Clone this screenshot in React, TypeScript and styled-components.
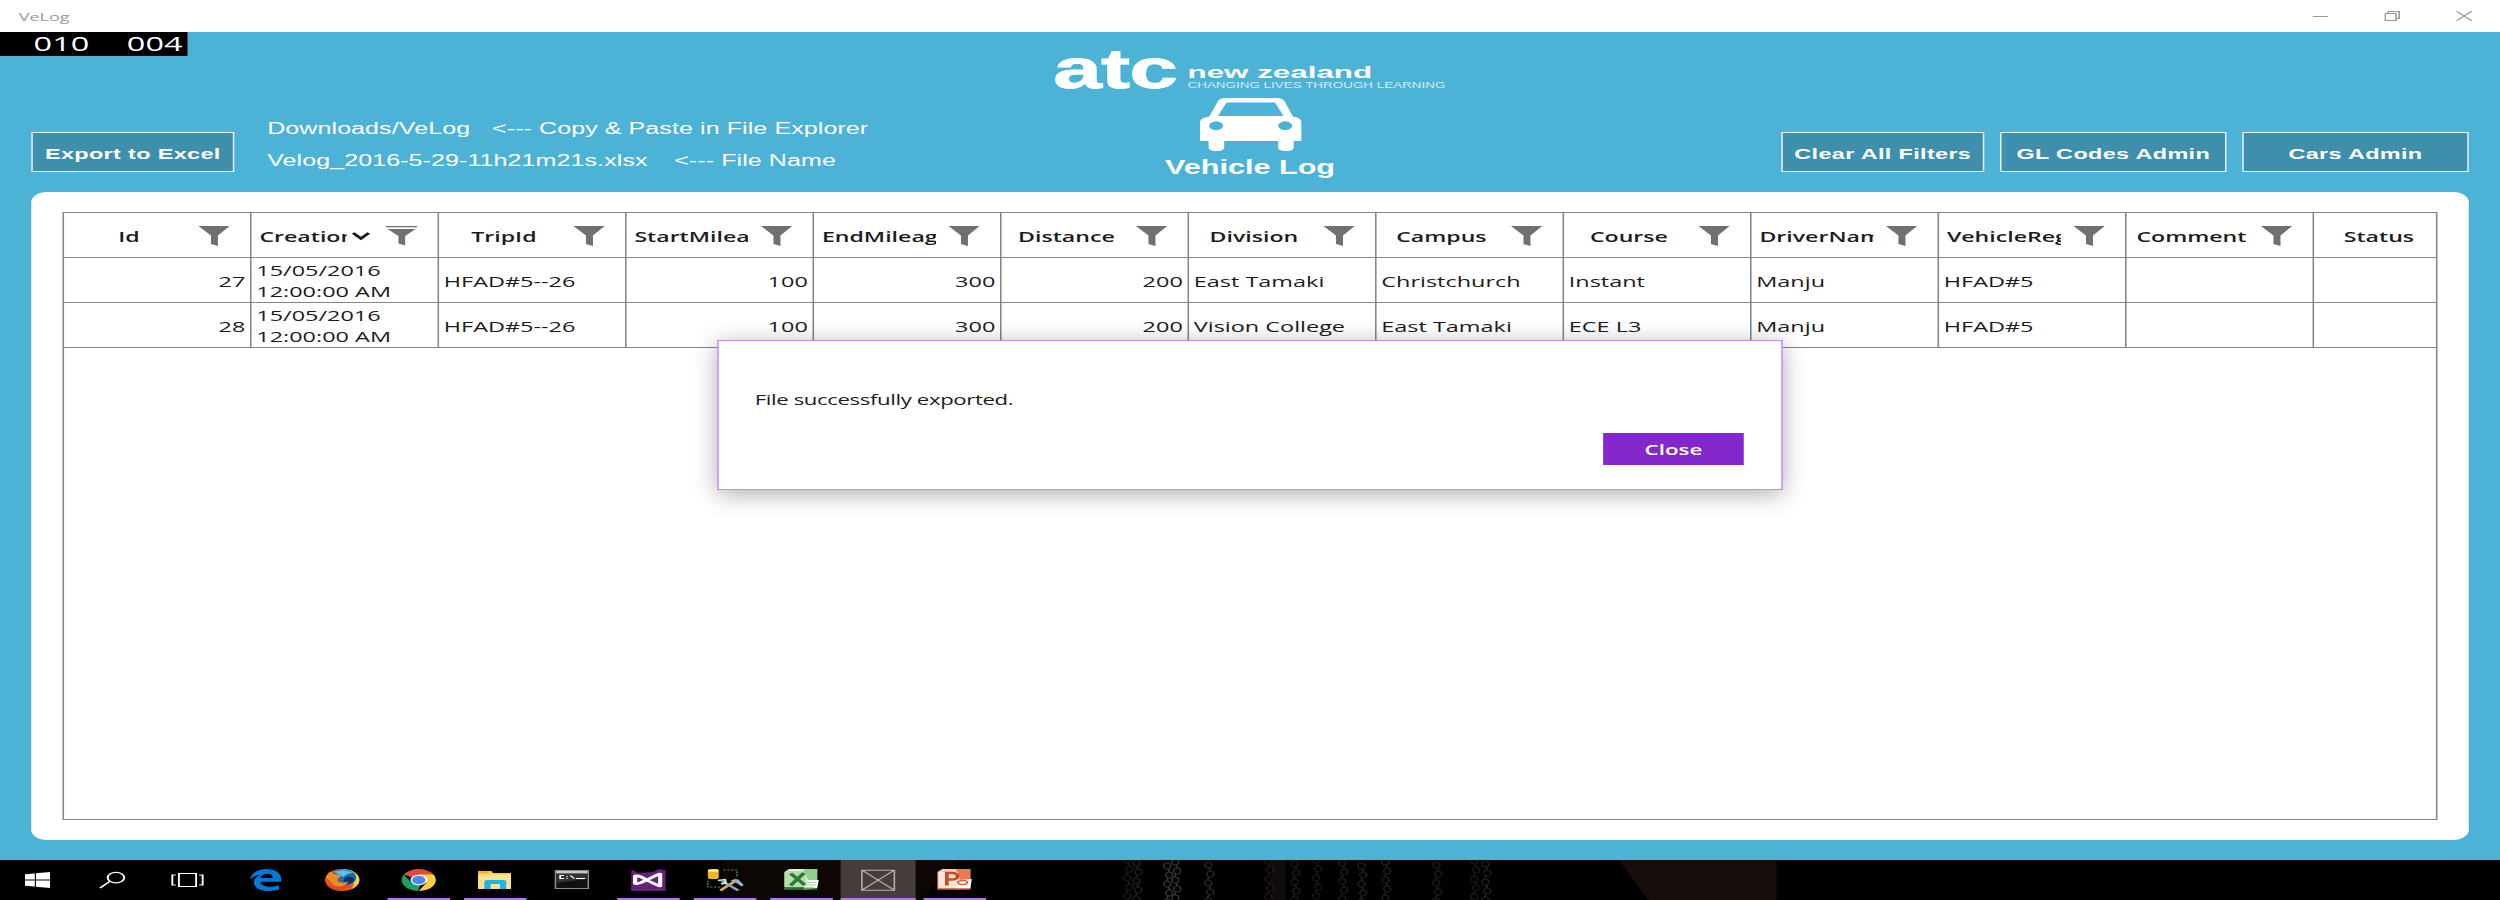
import React from "react";
import styled, { createGlobalStyle } from "styled-components";

const ui = `"Open Sans", "Noto Sans", sans-serif`;
const arial = `"Liberation Sans", Arial, sans-serif`;

const GlobalStyle = createGlobalStyle`
  * { box-sizing: border-box; }
  body { margin: 0; background: #4db3d6; overflow: hidden; }
`;

/* The desktop is 1600x900 and is shown stretched across a wider screen. */
const Desktop = styled.div`
  width: 1600px;
  height: 900px;
  display: flex;
  flex-direction: column;
  position: relative;
  transform: scaleX(1.5625);
  transform-origin: 0 0;
  font-family: ${ui};
  background: #4db3d6;
`;

const TitleBar = styled.header`
  height: 32px;
  flex: none;
  display: flex;
  align-items: center;
  justify-content: space-between;
  padding: 0 0 0 12px;
  background: #fff;
  color: #999;
  font-size: 11.5px;
`;

const WindowButtons = styled.div`
  display: flex;
`;

const WindowButton = styled.span`
  width: 46px;
  height: 32px;
  display: flex;
  align-items: center;
  justify-content: center;
`;

const FrameCounter = styled.div`
  position: absolute;
  left: 0;
  top: 32px;
  width: 120px;
  height: 24px;
  padding-left: 21.5px;
  display: flex;
  gap: 24px;
  background: #000;
  color: #fff;
  font-size: 20.8px;
  line-height: 22px;
`;

const TopBar = styled.section`
  height: 160px;
  flex: none;
  padding: 0 20px;
  display: grid;
  grid-template-columns: 655px 1fr 440px;
`;

const TopLeft = styled.div`
  display: flex;
  align-items: flex-start;
  gap: 21px;
  padding-top: 100px;
`;

const TopRight = styled.div`
  display: flex;
  justify-content: flex-end;
  gap: 10px;
  padding-top: 100px;
`;

const ActionButton = styled.button<{ $w: number }>`
  width: ${(p) => p.$w}px;
  height: 40px;
  padding: 2px 0 0;
  border: 1px solid #e3f2f8;
  background: #3d8fab;
  color: #fff;
  font: bold 15px ${arial};
  letter-spacing: 0.22px;
  white-space: nowrap;
`;

const Notes = styled.div`
  margin-top: -19px;
  color: #fff;
  font: 16px/32px ${arial};
  letter-spacing: 0.06px;
  white-space: pre;
`;

const Note = styled.div<{ $gap: number }>`
  display: flex;
  gap: ${(p) => p.$gap}px;
`;

const Brand = styled.div`
  display: flex;
  flex-direction: column;
  color: #fff;
  font-family: ${arial};
  padding-top: 14px;
`;

const Logo = styled.div`
  display: flex;
  height: 52px;
  white-space: nowrap;
`;

const LogoMark = styled.span`
  width: 85px;
  margin-left: -1px;
  font-size: 56px;
  font-weight: bold;
  line-height: 46px;
  letter-spacing: -0.5px;
  -webkit-text-stroke: 0.8px #fff;
`;

const LogoText = styled.div`
  padding: 18px 0 0 1px;
`;

const LogoName = styled.div`
  font-size: 17px;
  line-height: 17px;
  font-weight: bold;
  transform: scaleX(1.18);
  transform-origin: 0 0;
`;

const LogoTagline = styled.div`
  font-size: 8.6px;
  line-height: 8px;
  opacity: 0.75;
`;

const AppName = styled.div`
  width: 250px;
  display: flex;
  flex-direction: column;
  align-items: center;
  gap: 5px;
  font-size: 19.6px;
  line-height: 22px;
  font-weight: bold;
`;

const Panel = styled.main`
  height: 648px;
  flex: none;
  margin: 0 20px 20px;
  padding: 20px;
  border-radius: 10px;
  background: #fff;
`;

const Grid = styled.div`
  height: 608px;
  border: 1px solid #868686;
  color: #1c1c1c;
  font-size: 15px;
`;

const GridRow = styled.div`
  display: grid;
  grid-template-columns: repeat(12, 120px) 78px;
  height: 45px;
  border-bottom: 1px solid #868686;
`;

const HeadCell = styled.div`
  display: flex;
  align-items: center;
  padding: 1px 13px 0 5px;
  border-right: 1px solid #868686;
  &:last-child {
    border-right: 0;
    padding: 1px 0 0 5px;
  }
`;

const HeadLabel = styled.span<{ $fit: boolean }>`
  flex: 1;
  min-width: 0;
  overflow: hidden;
  white-space: nowrap;
  text-align: ${(p) => (p.$fit ? "center" : "left")};
  font-size: 14.8px;
  line-height: 22px;
  font-weight: 600;
`;

const SortArrow = styled.svg`
  flex: none;
  width: 12px;
  height: 10px;
  margin: 0 2px 0 3px;
`;

const FunnelIcon = styled.svg`
  flex: none;
  width: 20px;
  height: 20px;
  margin: 0 0 0 8px;
`;

const Cell = styled.div<{ $right?: boolean; $lines?: boolean }>`
  display: flex;
  align-items: center;
  justify-content: ${(p) => (p.$right ? "flex-end" : "flex-start")};
  padding: ${(p) => (p.$lines ? 2 : 3)}px 3px 0 3px;
  line-height: 21px;
  white-space: pre;
  border-right: 1px solid #868686;
  &:last-child {
    border-right: 0;
  }
`;

const Dialog = styled.div`
  position: absolute;
  left: 459px;
  top: 340px;
  width: 682px;
  height: 150px;
  padding: 48px 24px 24px 23px;
  display: flex;
  flex-direction: column;
  justify-content: space-between;
  border: 1px solid #c787fb;
  background: #fff;
  box-shadow: 0 4px 18px rgba(0, 0, 0, 0.32);
  color: #1c1c1c;
  font-size: 14.2px;
  line-height: 22px;
  letter-spacing: -0.24px;
`;

const CloseButton = styled.button`
  align-self: flex-end;
  width: 90px;
  height: 32px;
  padding: 0;
  border: 0;
  background: #8427cc;
  color: #fff;
  font: 600 14.3px ${ui};
`;

const Taskbar = styled.footer`
  position: relative;
  height: 40px;
  flex: none;
  display: flex;
  overflow: hidden;
  background: #000;
`;

const Wallpaper = styled.svg`
  position: absolute;
  inset: 0;
  width: 1600px;
  height: 40px;
`;

const TaskItem = styled.div<{ $active?: boolean; $tight?: boolean }>`
  position: relative;
  width: 48px;
  height: 40px;
  margin-right: ${(p) => (p.$tight ? 0 : 1)}px;
  display: flex;
  align-items: center;
  justify-content: center;
  background: ${(p) => (p.$active ? "#463c3a" : "transparent")};
  &:nth-of-type(3) {
    margin-right: 2px;
  }
`;

const Running = styled.i<{ $active?: boolean }>`
  position: absolute;
  bottom: 0;
  left: ${(p) => (p.$active ? 0 : 4)}px;
  right: ${(p) => (p.$active ? 0 : 4)}px;
  height: 2px;
  background: #bd72f3;
`;

const TaskIcon = styled.svg`
  width: 22px;
  height: 22px;
  overflow: visible;
`;

function Funnel({ filtered }: { filtered?: boolean }) {
  return (
    <FunnelIcon viewBox="0 0 20 20" fill="#707070">
      {filtered ? (
        <>
          <path d="M0 0h20v1.2H0z" />
          <path d="M1 3h18l-6.700 7v9.500L8 17.500V10z" />
        </>
      ) : (
        <path d="M0 0h20l-7.500 9.500V20L8 18V9.500z" />
      )}
    </FunnelIcon>
  );
}

function Car() {
  return (
    <svg width="65" height="53" viewBox="0 0 65 53">
      <path
        fill="#fff"
        fillRule="evenodd"
        d="M16 0h33c2.500 0 4 1 5 3l5.500 15.500c3.500 1 5.500 3 5.500 6V43h-5v6.500c0 5-10 5-10 0V43H15.500v6.500c0 5-10 5-10 0V43H0V24.500c0-3 2-5 6-6L11.500 3c1-2 2.500-3 4.500-3zM17 4.500L11.500 18h42L48 4.500zM10.300 23.300a4.400 4.400 0 1 0 .01 0zM54.500 23.300a4.400 4.400 0 1 0 .01 0z"
      />
    </svg>
  );
}

const chains = [
  [1128, 0.35], [1137, 0.45], [1168, 0.75], [1176, 0.75], [1209, 0.55], [1269, 0.35], [1295, 0.4],
  [1317, 0.35], [1343, 0.4], [1362, 0.45], [1386, 0.45], [1437, 0.4], [1475, 0.35], [1486, 0.45],
];
const links = [0, 1, 2, 3, 4];

function WallpaperStrip() {
  return (
    <Wallpaper viewBox="0 0 1600 40" aria-hidden>
      <path d="M462 0h150l-22 40H462z" fill="#0c0605" />
      <path d="M814 0h9v40h-9z" fill="#110b0a" />
      <path d="M1036 0h101v40h-82z" fill="#170d0a" />
      {chains.map(([x, o], i) => (
        <g
          key={x}
          transform={`translate(${x / 1.5625} ${(i * 3) % 7})`}
          fill="none"
          stroke="#4a4744"
          strokeOpacity={o}
        >
          {links.map((n) => (
            <React.Fragment key={n}>
              <ellipse cx={n % 2 ? 0.8 : -0.4} cy={n * 9} rx="2.200" ry="3" />
              <path d={`M0 ${n * 9 + 3}l${n % 2 ? -1 : 1} 3`} />
            </React.Fragment>
          ))}
        </g>
      ))}
    </Wallpaper>
  );
}

const icons: Record<string, React.ReactNode> = {
  start: (
    <path fill="#fff" d="M3 5.300l6.300-.9v6.200H3zM10 4.300l9-1.300v7.600h-9zM3 11.400h6.300v6.200L3 16.700zM10 11.400h9V19l-9-1.300z" />
  ),
  search: (
    <g fill="none" stroke="#fff" strokeWidth="1.300">
      <circle cx="13.200" cy="8.600" r="5.300" />
      <path d="M9.300 12.400L3 19" />
    </g>
  ),
  tasks: (
    <g fill="none" stroke="#fff" strokeWidth="1.200">
      <path d="M5.500 4.500h11v13h-11zM3.500 6H1.300v10h2.200M18.500 6h2.200v10h-2.200" />
    </g>
  ),
  edge: (
    <path
      fill="#0078d7"
      d="M1 10.500C1.800 4 6 0 11.500 0 17.500 0 21 4.500 21 10.500v2.300H7.800c.2 3.500 3 5 6.300 5 2 0 4-.6 5.500-1.500v4.300c-2 1-4.200 1.400-6.500 1.400-6 0-9.600-3.500-9.600-8.700 0-3.400 1.700-6 4.500-7.500C4.800 6.500 2.700 8 1 10.500zM7.900 9h7.600c0-2.800-1.400-4.300-3.700-4.300C9.500 4.700 8.200 6.600 7.900 9z"
    />
  ),
  firefox: (
    <>
      <circle cx="11" cy="11" r="11" fill="#e8591c" />
      <path d="M11 0a11 11 0 0 1 11 11c0 4-2 7-5 9 2-4 2-9 0-13z" fill="#fbd34a" />
      <circle cx="12" cy="8.600" r="8" fill="#1b6fb5" />
      <path d="M6 3c4-3 9-2 12 1-3 0-5 2-6 4z" fill="#5cc1ee" />
      <path d="M13 8c3-1 5 0 6 2-1 4-4 6-8 5z" fill="#0d2f6b" />
      <path d="M.5 8L3 2.500 5.500 5 10 6c1 2-2 2.500-2 5 0 3 4 3 7 1.500-1 4-5 6-9 4z" fill="#f08a24" />
      <path d="M.3 9C1 18 9 20 16 16c-2 4-6 6-9 5C3 20 0 16 .3 9z" fill="#e0491b" />
    </>
  ),
  chrome: (
    <>
      <path d="M11 11L1.500 5.500a11 11 0 0 1 19 0z" fill="#dd4b3e" />
      <path d="M11 5.500h9.500A11 11 0 0 1 11 22l5-8.500z" fill="#ffcd42" />
      <path d="M1.500 5.500L6.500 14l5.500 2-1.500 6A11 11 0 0 1 1.500 5.500z" fill="#1ea061" />
      <circle cx="11" cy="11" r="5.300" fill="#fff" />
      <circle cx="11" cy="11" r="4.300" fill="#4a8af4" />
    </>
  ),
  folder: (
    <>
      <path d="M0 2h8.500l1 2H21v16H0z" fill="#f5c84c" />
      <path d="M1.500 2.600h5v1.200h-5z" fill="#f79d1e" />
      <path d="M0 5.500h21V20H0z" fill="#fde28a" />
      <path d="M4 20v-8l1.500-1h11l1.500 1v8h-4v-5H8v5z" fill="#1bb5ef" />
    </>
  ),
  cmd: (
    <>
      <path d="M.5 1.500h21v18H.5z" fill="#111" stroke="#8c8c8c" />
      <path d="M1 2h20v2.500H1z" fill="#c9c9c9" />
      <path d="M1 5h20v5L1 14z" fill="#333" />
      <path
        d="M6 6.500H3.500v3H6M8 7v.8M8 9v.8M10 6.500l2.500 3M13.500 9.500h6"
        stroke="#fff"
        strokeWidth="1.100"
        fill="none"
      />
    </>
  ),
  vs: (
    <>
      <path d="M0 2l1.500-1L4 4l10-1 4-3 4 1.500V22H0z" fill="#68217a" />
      <path
        d="M2.500 7v7.500c3 1 6-3 8.500-4.500 3-2 4.500-4 7.500-5v12c-3-1-4.500-3-7.500-5C8.500 10 5.500 6 2.500 7z"
        fill="none"
        stroke="#fff"
        strokeWidth="2.600"
        strokeLinejoin="round"
      />
    </>
  ),
  tools: (
    <>
      <path d="M10 1h8.500v7M0 12v6h8" fill="none" stroke="#2f9a35" strokeDasharray="1.500 1" />
      <rect x="0" y="0" width="7" height="10" rx="2" fill="#f0b429" />
      <ellipse cx="3.500" cy="1.500" rx="3.500" ry="1.500" fill="#ffe08a" />
      <path d="M8 21.500L17.500 12" stroke="#e3b04b" strokeWidth="2.200" />
      <path d="M14.500 11.500l3-1.500 2 .5 3.500 5.500-1.500 1.500-3-3.500z" fill="#9fb0c8" />
      <path d="M9 12l10.500 9.500" stroke="#8fa3c0" strokeWidth="2.200" />
      <path d="M6.500 11.500l4.500-1 .5 3.500-3 1" fill="none" stroke="#dfe6f0" strokeWidth="1.400" />
    </>
  ),
  excel: (
    <>
      <path d="M0 3l3-3h18v18H0z" fill="#dff0dc" />
      <path d="M12 0h9v14h-5z" fill="#8fd08a" />
      <path d="M0 4l1.500-2H13l2 16.500L0 20z" fill="#8fcf8c" opacity="0.550" />
      <path d="M14 11h8l-1 8-9 2z" fill="#f2f8f0" />
      <path d="M12.500 13.500h8M12 16h8M12 18.500h7" stroke="#5bab5b" strokeWidth="0.700" />
      <path d="M4 4.500L13 16M12.500 4L4 16.500" stroke="#2a7d2f" strokeWidth="2.800" />
      <path d="M0 20h21" stroke="#2c8a39" strokeWidth="1.500" />
    </>
  ),
  placeholder: (
    <path
      d="M.6 1.200h20.800v20H.6zM.6 1.200l20.800 20M21.400 1.200L.6 21.200"
      fill="none"
      stroke="#b5b1b0"
      strokeWidth="1"
    />
  ),
  ppt: (
    <>
      <path d="M0 3l3-3h18v20H0z" fill="#f4c9b5" />
      <path d="M12 0h9v12h-6z" fill="#ea7a55" />
      <path d="M1 3h12v16H1z" fill="#fbe7dd" />
      <path d="M13 11l9-1-1 9-9 1.500z" fill="#fff" />
      <ellipse cx="16" cy="13.500" rx="3" ry="2" fill="none" stroke="#de5b33" strokeWidth="1.400" />
      <path d="M6 16.500V4h3.500c4.500 0 4.500 6.500 0 6.500H6" fill="none" stroke="#d04a20" strokeWidth="2.400" />
      <path d="M0 20h21" stroke="#de5b33" strokeWidth="1.500" />
    </>
  ),
};

const tasks: { icon: string; running?: boolean; active?: boolean; tight?: boolean }[] = [
  { icon: "start", tight: true },
  { icon: "search", tight: true },
  { icon: "tasks", tight: true },
  { icon: "edge" },
  { icon: "firefox" },
  { icon: "chrome", running: true },
  { icon: "folder", running: true },
  { icon: "cmd" },
  { icon: "vs", running: true },
  { icon: "tools", running: true },
  { icon: "excel", running: true },
  { icon: "placeholder", running: true, active: true },
  { icon: "ppt", running: true },
];

const columns: { label: string; fit?: boolean; sorted?: boolean; plain?: boolean }[] = [
  { label: "Id", fit: true },
  { label: "CreationDate", sorted: true },
  { label: "TripId", fit: true },
  { label: "StartMileage" },
  { label: "EndMileage" },
  { label: "Distance", fit: true },
  { label: "Division", fit: true },
  { label: "Campus", fit: true },
  { label: "Course", fit: true },
  { label: "DriverName" },
  { label: "VehicleRego" },
  { label: "Comment", fit: true },
  { label: "Status", fit: true, plain: true },
];

const created = "15/05/2016\n12:00:00 AM";
const rows = [
  ["27", created, "HFAD#5--26", "100", "300", "200", "East Tamaki", "Christchurch", "Instant", "Manju", "HFAD#5", "", ""],
  ["28", created, "HFAD#5--26", "100", "300", "200", "Vision College", "East Tamaki", "ECE L3", "Manju", "HFAD#5", "", ""],
];
const numeric = [0, 3, 4, 5];

export default function App() {
  return (
    <>
      <GlobalStyle />
      <Desktop>
        <TitleBar>
          <span>VeLog</span>
          <WindowButtons>
            <WindowButton>
              <svg width="10" height="10"><path d="M0 5.500h10" stroke="#999" /></svg>
            </WindowButton>
            <WindowButton>
              <svg width="10" height="10" fill="none" stroke="#999">
                <path d="M.5 2.500h7v7h-7zM2.500 2.500v-2h7v7h-2" />
              </svg>
            </WindowButton>
            <WindowButton>
              <svg width="10" height="10"><path d="M0 0l10 10M10 0L0 10" stroke="#999" /></svg>
            </WindowButton>
          </WindowButtons>
        </TitleBar>
        <TopBar>
          <TopLeft>
            <ActionButton $w={130}>Export to Excel</ActionButton>
            <Notes>
              <Note $gap={14}>
                <span>Downloads/VeLog</span>
                <span>{"<--- Copy & Paste in File Explorer"}</span>
              </Note>
              <Note $gap={17}>
                <span>Velog_2016-5-29-11h21m21s.xlsx</span>
                <span>{"<--- File Name"}</span>
              </Note>
            </Notes>
          </TopLeft>
          <Brand>
            <Logo>
              <LogoMark>atc</LogoMark>
              <LogoText>
                <LogoName>new zealand</LogoName>
                <LogoTagline>CHANGING LIVES THROUGH LEARNING</LogoTagline>
              </LogoText>
            </Logo>
            <AppName>
              <Car />
              Vehicle Log
            </AppName>
          </Brand>
          <TopRight>
            <ActionButton $w={130}>Clear All Filters</ActionButton>
            <ActionButton $w={145}>GL Codes Admin</ActionButton>
            <ActionButton $w={145}>Cars Admin</ActionButton>
          </TopRight>
        </TopBar>
        <Panel>
          <Grid>
            <GridRow>
              {columns.map((c) => (
                <HeadCell key={c.label}>
                  <HeadLabel $fit={!!c.fit}>{c.label}</HeadLabel>
                  {c.sorted && (
                    <SortArrow viewBox="0 0 12 10">
                      <path d="M1 2l5 5.500L11 2" fill="none" stroke="#1c1c1c" strokeWidth="2.400" />
                    </SortArrow>
                  )}
                  {!c.plain && <Funnel filtered={c.sorted} />}
                </HeadCell>
              ))}
            </GridRow>
            {rows.map((r) => (
              <GridRow key={r[0]}>
                {r.map((v, i) => (
                  <Cell key={i} $right={numeric.includes(i)} $lines={i === 1}>{v}</Cell>
                ))}
              </GridRow>
            ))}
          </Grid>
        </Panel>
        <Taskbar>
          <WallpaperStrip />
          {tasks.map((t) => (
            <TaskItem key={t.icon} $active={t.active} $tight={t.tight}>
              <TaskIcon viewBox="0 0 22 22">{icons[t.icon]}</TaskIcon>
              {t.running && <Running $active={t.active} />}
            </TaskItem>
          ))}
        </Taskbar>
        <FrameCounter>
          <span>010</span>
          <span>004</span>
        </FrameCounter>
        <Dialog>
          <span>File successfully exported.</span>
          <CloseButton>Close</CloseButton>
        </Dialog>
      </Desktop>
    </>
  );
}
